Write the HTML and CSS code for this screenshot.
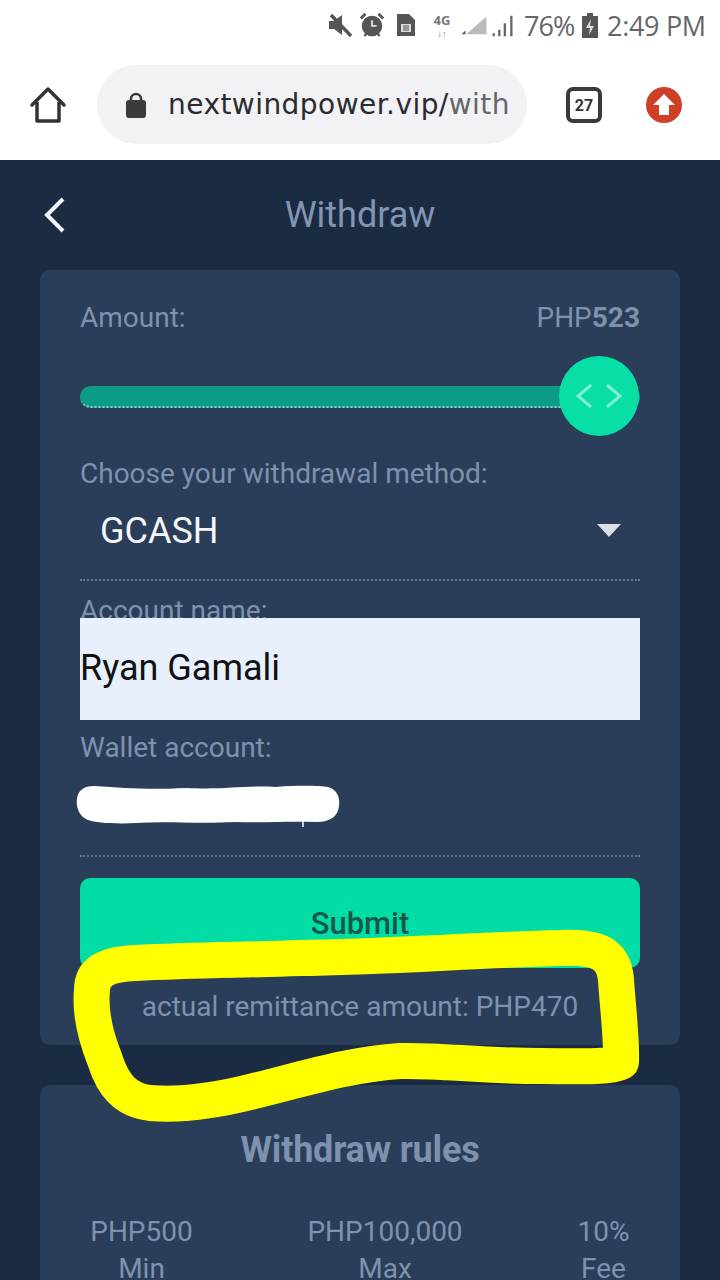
FILE: index.html
```html
<!DOCTYPE html>
<html lang="en">
<head>
<meta charset="utf-8">
<title>Withdraw</title>
<link rel="stylesheet" href="styles.css">
</head>
<body>
<div class="screen">
  <header class="chrome">
    <div class="status">
      <svg class="si i-mute" width="24" height="24" viewBox="0 0 24 24"><path d="M1 8h5l8-6v20l-8-6H1z" fill="#555"/><path d="M3 2l20 21" stroke="#555" stroke-width="3.5"/></svg>
      <svg class="si i-alarm" width="28" height="28" viewBox="0 0 30 30"><circle cx="15" cy="16" r="11" fill="#555"/><path d="M15 10v6h5" stroke="#ddd" stroke-width="2" fill="none"/><path d="M3 8l5-5M27 8l-5-5" stroke="#555" stroke-width="3"/><path d="M7 27l2-3M23 27l-2-3" stroke="#555" stroke-width="2.5"/></svg>
      <svg class="si i-sim" width="22" height="26" viewBox="0 0 22 26"><path d="M2 2h12l6 6v16H2z" fill="#555"/><rect x="6" y="12" width="10" height="8" fill="#ddd"/><path d="M9 13v6M11 13v6M13 13v6" stroke="#555"/></svg>
      <span class="net"><span>4G</span><small>↓↑</small></span>
      <svg class="si i-sig1" width="28" height="26" viewBox="0 0 36 28"><path d="M34 3v23H8z" fill="#bbb"/><path d="M2 26h5v-5z" fill="#555"/></svg>
      <svg class="si i-sig2" width="26" height="26" viewBox="0 0 24 28"><path d="M2 26v-3M8 26v-7M14 26V12M21 26V4" stroke="#666" stroke-width="2.5"/></svg>
      <span class="pct">76%</span>
      <svg class="si i-batt" width="16" height="26" viewBox="0 0 16 26"><path d="M5 1h6v3h5v22H0V4h5z" fill="#555"/><path d="M9 7l-5 9h4l-1 7 5-9H8z" fill="#ddd"/></svg>
      <span class="time">2:49 PM</span>
    </div>
    <div class="toolbar">
      <svg class="home" width="38" height="38" viewBox="0 0 38 38"><path d="M3 19L19 3l16 16" fill="none" stroke="#333" stroke-width="3.5" stroke-linejoin="round" stroke-linecap="round"/><path d="M8 16v19h22V16" fill="none" stroke="#333" stroke-width="3.5" stroke-linejoin="round"/></svg>
      <div class="omnibox">
        <svg class="lock" width="20" height="26" viewBox="0 0 20 26"><path d="M5 10V7a5 5 0 0 1 10 0v3" fill="none" stroke="#3a3a3e" stroke-width="2.5"/><rect y="8" width="20" height="18" rx="3" fill="#3a3a3e"/></svg>
        <span class="url">nextwindpower.vip/<span class="url-path">with</span></span>
      </div>
      <div class="tabs">27</div>
      <svg class="update" width="36" height="36" viewBox="0 0 36 36"><circle cx="18" cy="18" r="18" fill="#cf3f27"/><path d="M18 7l11 11h-6v10H13V18H7z" fill="#fff"/></svg>
    </div>
  </header>

  <main class="page">
    <div class="topbar">
      <svg class="back" width="22" height="36" viewBox="0 0 22 36"><path d="M19 2L3 18l16 16" fill="none" stroke="#f2f5fa" stroke-width="4"/></svg>
      <h1 class="title">Withdraw</h1>
    </div>

    <section class="card form">
      <div class="row">
        <span>Amount:</span>
        <span>PHP<b>523</b></span>
      </div>
      <div class="slider">
        <div class="track"></div>
        <div class="thumb">
          <svg width="46" height="24" viewBox="0 0 46 24"><path d="M15 1L2 12l13 11M31 1l13 11-13 11" fill="none" stroke="#7ff0d3" stroke-width="3"/></svg>
        </div>
      </div>
      <div class="label method">Choose your withdrawal method:</div>
      <div class="select">
        <span>GCASH</span>
        <i class="caret"></i>
      </div>
      <div class="label account">Account name:</div>
      <div class="input">Ryan Gamali</div>
      <div class="label wallet">Wallet account:</div>
      <div class="wallet-field">
        <svg class="redact" width="264" height="44" viewBox="0 0 264 44"><path d="M18 2C50 4 70 6 110 4C150 6 170 1 200 3C225 1 245 2 252 3C262 6 264 14 263 22C262 32 255 38 240 38C210 37 190 39 160 38C120 40 90 37 60 39C40 40 20 39 12 36C2 32 0 22 1 15C2 6 8 2 18 2Z" fill="#fff"/><path d="M227 37v6" stroke="#fff" stroke-width="1.5"/></svg>
      </div>
      <button class="submit">Submit</button>
      <p class="remit">actual remittance amount: PHP470</p>
    </section>

    <section class="card rules">
      <h2 class="rules-title">Withdraw rules</h2>
      <div class="stats">
        <div class="stat"><span>PHP500</span><span>Min</span></div>
        <div class="stat"><span>PHP100,000</span><span>Max</span></div>
        <div class="stat"><span>10%</span><span>Fee</span></div>
      </div>
    </section>
  </main>

  <svg class="scribble" width="720" height="1280" viewBox="0 0 720 1280"><path d="M92 990C92 970 110 964 135 963C200 960 250 960 300 958C380 957 480 950 560 948C600 946 614 955 616 980C618 1010 622 1040 621 1062C610 1068 570 1066 540 1066C480 1066 440 1060 400 1061C350 1064 300 1080 250 1092C210 1102 175 1105 150 1103C125 1100 113 1085 105 1060C95 1035 90 1010 92 990Z" fill="none" stroke="#ffff00" stroke-width="36" stroke-linejoin="round"/></svg>
</div>
</body>
</html>
```

FILE: styles.css
```css
* { box-sizing: border-box; }
html, body { margin: 0; padding: 0; }
body { width: 720px; height: 1280px; overflow: hidden; font-family: Roboto, "Liberation Sans", sans-serif; background: #1b2b43; }
.screen { position: relative; width: 720px; height: 1280px; overflow: hidden; }

.chrome { height: 160px; background: #fff; display: flex; flex-direction: column; }
.status { height: 50px; display: flex; align-items: center; justify-content: flex-end; padding: 0 15px 0 0; color: #666; font-family: "Open Sans", sans-serif; font-size: 27px; }
.si { flex: none; }
.i-mute { margin-right: 6px; }
.i-alarm { margin-right: 9px; }
.i-sim { margin-right: 15px; }
.i-sig1 { margin-right: 2px; }
.i-sig2 { margin-right: 8px; }
.i-batt { margin-right: 9px; }
.net { width: 20px; display: flex; flex-direction: column; align-items: center; gap: 2px; font-size: 13px; font-weight: 700; line-height: 14px; color: #777; margin-right: 8px; }
.net small { font-size: 9px; line-height: 9px; }
.pct { width: 51px; margin-right: 7px; letter-spacing: -1px; white-space: nowrap; }
.time { width: 98px; white-space: nowrap; letter-spacing: -0.3px; text-align: right; }

.toolbar { flex: 1; display: flex; align-items: flex-start; padding: 15px 0 0 29px; }
.home { margin-top: 21px; flex: none; }
.omnibox { width: 430px; height: 79px; margin-left: 30px; border-radius: 40px; background: #f1f1f6; display: flex; align-items: center; padding-left: 29px; flex: none; }
.lock { flex: none; }
.url { margin-left: 22px; font-family: "DejaVu Sans", sans-serif; font-size: 28px; letter-spacing: 0.45px; color: #2b2b2e; white-space: nowrap; }
.url-path { color: #666; }
.tabs { width: 36px; height: 36px; margin: 22px 0 0 39px; border: 4px solid #3a3a3a; border-radius: 7px; font-size: 16px; font-weight: 700; color: #333; display: flex; align-items: center; justify-content: center; flex: none; }
.update { margin: 22px 0 0 44px; flex: none; }

.page { padding: 0 40px; }
.topbar { position: relative; height: 110px; display: flex; align-items: center; justify-content: center; }
.back { position: absolute; left: 4px; top: 37px; }
.title { margin: 0; font-size: 36px; font-weight: 400; color: #8296b4; }

.card { background: #2a3e59; border-radius: 10px; padding: 0 40px; color: #7e92ae; font-size: 28px; }
.form { height: 775px; margin-bottom: 40px; display: flex; flex-direction: column; }
.row { display: flex; justify-content: space-between; line-height: 30px; padding-top: 33px; height: 62px; }
.row b { font-weight: 700; }
.slider { position: relative; height: 80px; margin-top: 24px; display: flex; align-items: center; }
.track { width: 100%; height: 22px; margin-top: 2px; border-radius: 11px; background: #0e9a88; border-bottom: 2px dotted #8ecfc2; }
.thumb { position: absolute; right: 1px; top: 0; width: 80px; height: 80px; border-radius: 50%; background: #08dfa6; display: flex; align-items: center; justify-content: center; }
.label { height: 30px; line-height: 30px; padding-top: 1px; }
.method { margin-top: 22px; }
.select { height: 93px; display: flex; align-items: center; justify-content: space-between; padding: 0 19px 6px 20px; border-bottom: 2px dotted #5f7590; color: #f4f6fa; font-size: 36px; }
.caret { width: 0; height: 0; border-left: 12.5px solid transparent; border-right: 12.5px solid transparent; border-top: 13px solid #dcdfe4; }
.account { height: 37px; padding-top: 15px; }
.input { height: 102px; background: #e8f0fe; color: #111; font-size: 36px; display: flex; align-items: center; padding-bottom: 2px; }
.wallet { margin-top: 12px; }
.wallet-field { height: 95px; border-bottom: 2px dotted #5f7590; padding-top: 22px; }
.redact { display: block; margin-left: -4px; }
.submit { display: block; width: 100%; height: 90px; margin-top: 21px; flex: none; border: 0; border-radius: 10px; background: #02dda6; color: #15574f; font: 500 31px Roboto, sans-serif; padding: 1px 0 0; }
.remit { margin: 24px 0 0; text-align: center; line-height: 30px; white-space: nowrap; }

.rules { height: 300px; padding: 0; }
.rules-title { margin: 0; padding-top: 45px; text-align: center; font-size: 36px; line-height: 40px; font-weight: 700; color: #7e92ae; letter-spacing: -0.2px; }
.stats { display: grid; grid-template-columns: 203px 284px 153px; margin-top: 43px; }
.stat { display: flex; flex-direction: column; align-items: center; line-height: 37px; }

.scribble { position: absolute; left: 0; top: 0; pointer-events: none; }
```
